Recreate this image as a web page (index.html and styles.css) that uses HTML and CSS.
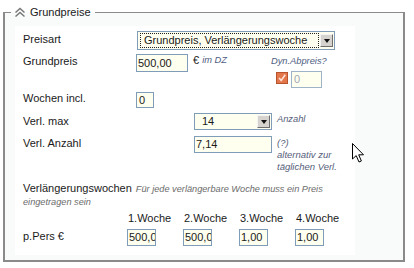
FILE: index.html
```html
<!DOCTYPE html>
<html lang="de">
<head>
<meta charset="utf-8">
<title>Grundpreise</title>
<link rel="stylesheet" href="styles.css">
</head>
<body>
<div class="page">
  <fieldset class="box">
    <legend class="legend">
      <svg class="chev" width="12" height="11" viewBox="0 0 12 11"><path d="M1.5 5.5 L6 1.5 L10.5 5.5 M1.5 9.5 L6 5.5 L10.5 9.5" fill="none" stroke="#777" stroke-width="1.5"/></svg>
      <span>Grundpreise</span>
    </legend>
    <div class="panel">
      <div class="row r1">
        <div class="lab">Preisart</div>
        <div class="sel wide focus"><span class="seltext"><span class="dot">Grundpreis, Verlängerungswoche</span></span><span class="btn"><span class="tri"></span></span></div>
      </div>
      <div class="row r2">
        <div class="lab">Grundpreis</div>
        <div class="cell c2">
          <span class="inp w52">500,00</span>
          <span class="euro">€</span>
          <span class="hint blue">im DZ</span>
          <div class="dyn">
            <span class="hint blue">Dyn.Abpreis?</span>
            <div class="dynrow">
              <span class="cb"><svg width="8" height="8" viewBox="0 0 8 8"><path d="M1 4 L3.2 6.4 L7.2 0.8" fill="none" stroke="#fde3d6" stroke-width="1.6"/></svg></span>
              <span class="inp w30 dis">0</span>
            </div>
          </div>
        </div>
      </div>
      <div class="row r3">
        <div class="lab">Wochen incl.</div>
        <span class="inp w18 h16">0</span>
      </div>
      <div class="row r4">
        <div class="lab">Verl. max</div>
        <div class="cell c4">
          <div class="sel mid"><span class="seltext">14</span><span class="btn"><span class="tri"></span></span></div>
          <span class="hint slate">Anzahl</span>
        </div>
      </div>
      <div class="row r5">
        <div class="lab">Verl. Anzahl</div>
        <div class="cell c4">
          <span class="inp w78">7,14</span>
          <span class="hint slate lines">(?)<br>alternativ zur<br>täglichen Verl.</span>
        </div>
      </div>
      <div class="section">
        <div class="sline"><span class="stitle">Verlängerungswochen</span><span class="hint gray">Für jede verlängerbare Woche muss ein Preis</span></div>
        <div class="sline"><span class="hint gray">eingetragen sein</span></div>
      </div>
      <div class="weeks">
        <span></span>
        <span class="wh">1.Woche</span>
        <span class="wh">2.Woche</span>
        <span class="wh">3.Woche</span>
        <span class="wh">4.Woche</span>
        <span class="lab plab">p.Pers €</span>
        <span class="inp w29">500,0</span>
        <span class="inp w29">500,0</span>
        <span class="inp w29">1,00</span>
        <span class="inp w29">1,00</span>
      </div>
    </div>
  </fieldset>
  <svg class="cursor" width="13" height="20" viewBox="0 0 13 20"><path d="M0.5 0.5 L0.5 16 L4.2 12.6 L7 19 L9.4 18 L6.7 11.8 L11.5 11.8 Z" fill="#fff" stroke="#000" stroke-width="1" stroke-linejoin="round"/></svg>
</div>
</body>
</html>
```
FILE: styles.css
```css
html, body {
  margin: 0;
  padding: 0;
  background: #fff;
}
.page {
  position: relative;
  width: 414px;
  height: 268px;
  padding: 5px 0 0 3px;
  box-sizing: border-box;
  font-family: "Liberation Sans", Arial, sans-serif;
  font-size: 11px;
  color: #1a1a1a;
}
.box {
  margin: 0;
  padding: 0 0 6px 10px;
  width: 402px;
  height: 257px;
  box-sizing: border-box;
  border: 2px solid #8a8a8a;
  border-top-width: 1px;
  background: #f9fbfa;
}
.legend {
  margin-left: -4px;
  padding: 0 4px 0 3px;
  line-height: 14px;
  display: flex;
  align-items: center;
  gap: 4px;
  color: #1a1a1a;
}
.chev { display: block; }
.panel {
  margin-top: 7px;
  width: 340px;
  height: 229px;
  box-sizing: border-box;
  background: #fff;
  padding: 4px 0 0 8px;
}
.row {
  display: grid;
  grid-template-columns: 113px 1fr;
  align-items: start;
}
.lab { line-height: 14px; }
.r1 { height: 19px; margin-top: 1px; }
.r1 .lab { margin-top: 1px; }
.r2 { margin-top: 4px; height: 34px; }
.r3 { margin-top: 4px; height: 16px; }
.r3 .lab { margin-top: -1px; }
.r4 { margin-top: 5px; height: 17px; }
.r4 .lab { margin-top: 1px; }
.r5 { margin-top: 6px; height: 38px; }
.r5 .lab { margin-top: 0; }
.cell { display: flex; align-items: flex-start; }
.c2 { position: relative; }
.c4 { margin-left: 58px; }
.inp {
  display: block;
  box-sizing: border-box;
  height: 18px;
  border: 1px solid #7f9db9;
  background: #fffff0;
  line-height: 16px;
  padding-left: 1px;
  overflow: hidden;
  white-space: nowrap;
  font-size: 11px;
  color: #1a1a1a;
}
.w52 { width: 52px; }
.w30 { width: 31px; height: 17px; line-height: 15px; padding-left: 2px; }
.w18 { width: 18px; padding-left: 2px; }
.h16 { height: 16px; line-height: 14px; }
.w78 { width: 78px; height: 17px; line-height: 15px; }
.w29 { width: 29px; height: 17px; line-height: 15px; }
.dis { color: #a0aab5; border-color: #9fb3c8; }
.euro { margin-left: 5px; font-size: 11px; line-height: 12px; }
.hint {
  font-style: italic;
  font-size: 9.3px;
  line-height: 12px;
}
.blue { color: #4d5d7f; }
.c2 > .blue { margin-left: 3px; line-height: 13px; }
.slate { color: #56607a; margin-left: 5px; line-height: 12px; }
.lines { font-size: 9.5px; line-height: 12px; margin-top: 1px; }
.gray { color: #6b6b6b; font-size: 9.2px; line-height: 14px; }
.dyn {
  margin-left: 44px;
  display: flex;
  flex-direction: column;
  align-items: flex-start;
  margin-top: 1px;
}
.dynrow { display: flex; align-items: flex-start; margin-top: 4px; margin-left: 5px; gap: 3px; }
.cb {
  width: 12px;
  height: 12px;
  box-sizing: border-box;
  border: 1px solid #b8532e;
  background: #e4764c;
  display: flex;
  align-items: center;
  justify-content: center;
  margin-top: 1px;
}
.cb svg { display: block; }
.sel {
  display: flex;
  box-sizing: border-box;
  border: 1px solid #7f9db9;
  background: #fffff0;
  align-items: center;
}
.wide { width: 198px; height: 19px; margin-left: 1px; }
.mid { width: 78px; height: 17px; }
.seltext {
  flex: 1;
  padding-left: 2px;
  line-height: 13px;
  white-space: nowrap;
}
.mid .seltext { padding-left: 7px; }
.dot {
  display: block;
  border: 1px dotted #222;
  padding-left: 3px;
  margin-right: 1px;
}
.btn {
  width: 13px;
  height: 13px;
  margin-right: 1px;
  box-sizing: border-box;
  background: #d6d3ce;
  border: 1px solid;
  border-color: #f4f4f4 #6e6e6e #6e6e6e #f4f4f4;
  display: flex;
  align-items: center;
  justify-content: center;
}
.tri {
  width: 0;
  height: 0;
  border-left: 3.5px solid transparent;
  border-right: 3.5px solid transparent;
  border-top: 4px solid #111;
}
.section {
  margin-top: 7px;
  display: flex;
  flex-direction: column;
}
.sline {
  display: flex;
  align-items: baseline;
  gap: 4px;
  height: 14px;
  line-height: 14px;
}
.weeks {
  margin-top: 2px;
  display: grid;
  grid-template-columns: 104px 56px 56px 56px 56px;
  grid-template-rows: 16px 19px;
  align-items: start;
}
.wh { padding-left: 1px; line-height: 14px; }
.plab { margin-top: 2px; }
.weeks .inp { margin-top: 2px; }
.cursor {
  position: absolute;
  left: 352px;
  top: 143px;
}
```
